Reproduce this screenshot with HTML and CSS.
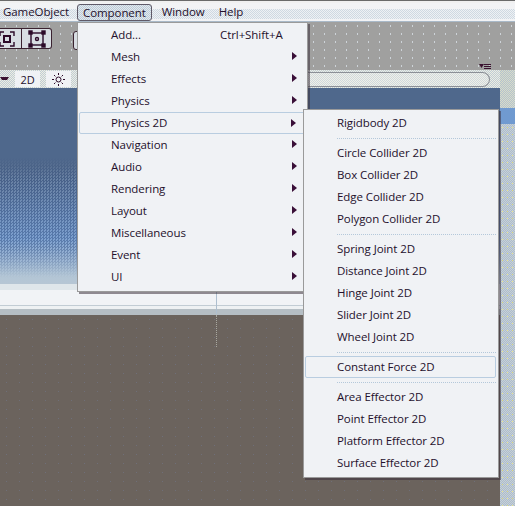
FILE: index.html
```html
<!DOCTYPE html>
<html lang="en">
<head>
    <meta charset="UTF-8">
    <meta name="viewport" content="width=device-width, initial-scale=1.0">
    <title>Component menu</title>
    <link rel="stylesheet" href="styles.css">
</head>
<body>
    <div id="window">
        <div id="title-strip"></div>
        <div id="menu-bar">
            <span class="menu-title">GameObject</span>
            <span class="menu-title open">Component</span>
            <span class="menu-title">Window</span>
            <span class="menu-title">Help</span>
        </div>
        <div id="toolbar">
            <div class="tool-group">
                <button class="tool-btn first">
                    <svg width="16" height="16" viewBox="0 0 16 16" fill="none" stroke="#2c0a28" stroke-width="1.4"><rect x="5" y="5" width="6" height="6" stroke-width="2"/><path d="M1 5V1h4M11 1h4v4M15 11v4h-4M5 15H1v-4"/></svg>
                </button>
                <button class="tool-btn">
                    <svg width="18" height="18" viewBox="0 0 18 18" fill="none" stroke="#2c0a28" stroke-width="1.4"><rect x="3" y="3" width="12" height="12"/><rect x="1" y="1" width="3" height="3" fill="#2c0a28"/><rect x="14" y="1" width="3" height="3" fill="#2c0a28"/><rect x="1" y="14" width="3" height="3" fill="#2c0a28"/><rect x="14" y="14" width="3" height="3" fill="#2c0a28"/><circle cx="9" cy="9" r="1.5"/></svg>
                </button>
                <div class="tool-stub"></div>
            </div>
            <svg class="panel-menu-icon" width="12" height="6" viewBox="0 0 12 6" fill="#3a1230"><path d="M0 0h5L2.5 4z"/><path d="M5 0h7v1H5zM5 2h7v1H5zM5 4h7v1H5z"/></svg>
        </div>
        <div id="workspace">
            <div id="scene-panel">
                <div id="scene-toolbar">
                    <span class="scene-drop"></span>
                    <span class="scene-btn">2D</span>
                    <span class="scene-btn">
                        <svg width="13" height="13" viewBox="0 0 13 13" fill="none" stroke="#2c0a28"><circle cx="6.5" cy="6.5" r="2.5"/><path d="M6.5 0v2M6.5 11v2M0 6.5h2M11 6.5h2M2 2l1.4 1.4M9.6 9.6L11 11M11 2L9.6 3.4M3.4 9.6L2 11"/></svg>
                    </span>
                    <div id="scene-search"></div>
                </div>
                <div id="sky"><div id="sky-dither"></div></div>
                <div id="horizon"><div class="grid-line"></div></div>
                <div id="ground"><div class="grid-dots"></div></div>
            </div>
            <div id="side-panel">
                <div id="side-tab"></div>
                <div id="side-header"></div>
                <div id="side-blue"></div>
                <div id="side-body"></div>
            </div>
        </div>

        <div id="component-menu" class="menu">
            <div class="item">Add...<span class="shortcut">Ctrl+Shift+A</span></div>
            <div class="item sub">Mesh</div>
            <div class="item sub">Effects</div>
            <div class="item sub">Physics</div>
            <div class="item sub active">Physics 2D</div>
            <div class="item sub">Navigation</div>
            <div class="item sub">Audio</div>
            <div class="item sub">Rendering</div>
            <div class="item sub">Layout</div>
            <div class="item sub">Miscellaneous</div>
            <div class="item sub">Event</div>
            <div class="item sub">UI</div>
        </div>

        <div id="physics-menu" class="menu">
            <div class="item">Rigidbody 2D</div>
            <div class="sep"></div>
            <div class="item">Circle Collider 2D</div>
            <div class="item">Box Collider 2D</div>
            <div class="item">Edge Collider 2D</div>
            <div class="item">Polygon Collider 2D</div>
            <div class="sep"></div>
            <div class="item">Spring Joint 2D</div>
            <div class="item">Distance Joint 2D</div>
            <div class="item">Hinge Joint 2D</div>
            <div class="item">Slider Joint 2D</div>
            <div class="item">Wheel Joint 2D</div>
            <div class="sep"></div>
            <div class="item active">Constant Force 2D</div>
            <div class="sep"></div>
            <div class="item">Area Effector 2D</div>
            <div class="item">Point Effector 2D</div>
            <div class="item">Platform Effector 2D</div>
            <div class="item">Surface Effector 2D</div>
        </div>
    </div>
</body>
</html>
```

FILE: styles.css
```css
body {
    margin: 0;
    font-family: "Open Sans", "Noto Sans", Arial, sans-serif;
    font-size: 11.5px;
    letter-spacing: -0.08px;
    color: #24102c;
}
#window {
    position: relative;
    width: 515px;
    height: 506px;
    overflow: hidden;
    display: flex;
    flex-direction: column;
}
#title-strip {
    height: 3px;
    background-color: #f0f0f0;
    border-top: 1px solid #6a6a6a;
    box-sizing: border-box;
}
#menu-bar {
    height: 19px;
    display: flex;
    align-items: stretch;
    box-sizing: border-box;
    padding-left: 3px;
    border-bottom: 1px solid #a9b9c8;
    background:
        linear-gradient(#f2f3f5 0 6px, transparent 6px 16px, #f2f3f5 16px),
        repeating-conic-gradient(#cfd9e2 0 25%, #eef1f4 0 50%) 0 0/2px 2px;
}
.menu-title {
    line-height: 18px;
    margin-right: 14px;
}
.menu-title.open {
    margin-left: -6px;
    margin-right: 10px;
    padding: 0 5px;
    height: 17px;
    line-height: 16px;
    margin-top: 1px;
    box-sizing: border-box;
    border: 1px solid #5f5a68;
    border-radius: 3px;
    background: repeating-conic-gradient(#bccbd8 0 25%, #e3e9ee 0 50%) 0 0/2px 2px;
}
#toolbar {
    position: relative;
    height: 48px;
    padding-top: 6px;
    box-sizing: border-box;
    background:
        radial-gradient(circle, #cdd3d8 0.5px, transparent 0.7px) 0 0/11px 8px,
        #a0a09f;
}
.panel-menu-icon {
    position: absolute;
    left: 479px;
    top: 42px;
}
.tool-group {
    display: flex;
    margin-left: -8px;
}
.tool-btn {
    width: 30px;
    height: 21px;
    padding: 0;
    display: flex;
    align-items: center;
    justify-content: center;
    border: 1px solid #3a2230;
    border-left-width: 0;
    background-color: #d8dde2;
    border-radius: 0 3px 3px 0;
}
.tool-btn.first {
    border-radius: 0;
}
.tool-stub {
    width: 30px;
    height: 19px;
    margin: 3px 0 0 21px;
    box-sizing: border-box;
    border: 1px solid #3a2230;
    border-radius: 3px;
    background-color: #d8dde2;
}
#workspace {
    flex-grow: 1;
    display: flex;
    min-height: 0;
}
#scene-panel {
    width: 500px;
    display: flex;
    flex-direction: column;
}
#scene-toolbar {
    height: 18px;
    box-sizing: border-box;
    display: flex;
    align-items: center;
    gap: 6px;
    background: repeating-conic-gradient(#c0ccd6 0 25%, #eceee2 0 50%) 0 0/2px 2px;
}
.scene-drop {
    width: 9px;
    height: 0;
    box-sizing: border-box;
    border-top: 3px solid #3a1230;
    border-left: 2.5px solid transparent;
    border-right: 2.5px solid transparent;
    margin-bottom: 2px;
}
.scene-btn {
    width: 25px;
    height: 16px;
    display: flex;
    align-items: center;
    justify-content: center;
    background-color: #f0f2f5;
    font-size: 11px;
}
#scene-search {
    margin-left: auto;
    margin-right: 10px;
    width: 190px;
    height: 15px;
    box-sizing: border-box;
    border: 1px solid #8b8f96;
    border-left: 0;
    border-radius: 0 8px 8px 0;
    background: repeating-conic-gradient(#d0d8df 0 25%, #f0f1e6 0 50%) 0 0/2px 2px;
}
#sky {
    position: relative;
    height: 196px;
    background: linear-gradient(#4f688c 0, #4f688c 78px, #6a92c8 150px, #b3c6d6 188px, #b6c6d4 196px);
}
#sky-dither {
    position: absolute;
    inset: 0;
    background: repeating-conic-gradient(rgba(40,60,100,0.28) 0 25%, rgba(255,255,255,0.12) 0 50%) 0 0/3px 3px;
    -webkit-mask-image: linear-gradient(transparent 70px, #000 90px, #000 160px, transparent 190px);
    mask-image: linear-gradient(transparent 70px, #000 90px, #000 160px, transparent 190px);
}
#horizon {
    position: relative;
    height: 31px;
    background: linear-gradient(#dfe6ea 0 6px, #f1f3f6 6px 21px, #c2ccd4 21px 22px, #eef1f3 22px 25px, #b5bec4 25px 31px);
}
.grid-line {
    position: absolute;
    left: 216px;
    top: 0;
    width: 1px;
    height: 30px;
    background-color: #aebfcf;
}
#ground {
    position: relative;
    flex-grow: 1;
    background:
        radial-gradient(circle, #6f6f78 0.5px, transparent 0.7px) 0 0/13px 9px,
        #6b635d;
}
.grid-dots {
    position: absolute;
    left: 216px;
    top: 0;
    height: 32px;
    border-left: 1px dotted #a8a8a0;
}
#side-panel {
    flex-grow: 1;
    display: flex;
    flex-direction: column;
    margin-top: -14px;
}
#side-tab {
    height: 14px;
    background-color: #eef1f4;
    border-radius: 3px 0 0 0;
    margin-left: 1px;
}
#side-header {
    height: 38px;
    background: repeating-conic-gradient(#b4c2ce 0 25%, #d8dcc8 0 50%) 0 0/2px 2px;
}
#side-blue {
    height: 16px;
    background-color: #709ad0;
}
#side-body {
    flex-grow: 1;
    background:
        radial-gradient(circle, #e6e27e 0.7px, transparent 0.9px) 0 0/5px 7px,
        repeating-conic-gradient(#aebdcb 0 25%, #c6d0d8 0 50%) 0 0/2px 2px;
}
.menu {
    position: absolute;
    box-sizing: border-box;
    padding: 1px;
    background-color: #f0f2f5;
    border: 1px solid #9a9a9a;
    box-shadow: 2px 2px 0 rgba(60,50,60,0.55);
}
#component-menu {
    left: 77px;
    top: 22px;
    width: 231px;
    height: 270px;
}
#physics-menu {
    left: 303px;
    top: 109px;
    width: 196px;
    height: 369px;
    padding-top: 2px;
}
.item {
    position: relative;
    height: 22px;
    line-height: 22px;
    box-sizing: border-box;
    padding-left: 32px;
    display: flex;
}
#physics-menu .item {
    margin-right: 1px;
}
.item.active {
    border: 1px solid #b9cde0;
    border-radius: 2px;
    padding-left: 31px;
    line-height: 20px;
}
.shortcut {
    position: absolute;
    left: 141px;
}
.item.sub::after {
    content: "";
    position: absolute;
    right: 9px;
    top: 6px;
    border-left: 5px solid #3a0f38;
    border-top: 4.5px solid transparent;
    border-bottom: 4.5px solid transparent;
}
.sep {
    height: 8px;
    box-sizing: border-box;
    margin: 0 1px 0 32px;
    padding-top: 4px;
}
.sep::before {
    content: "";
    display: block;
    border-top: 1px dotted #b4c8da;
}
```
